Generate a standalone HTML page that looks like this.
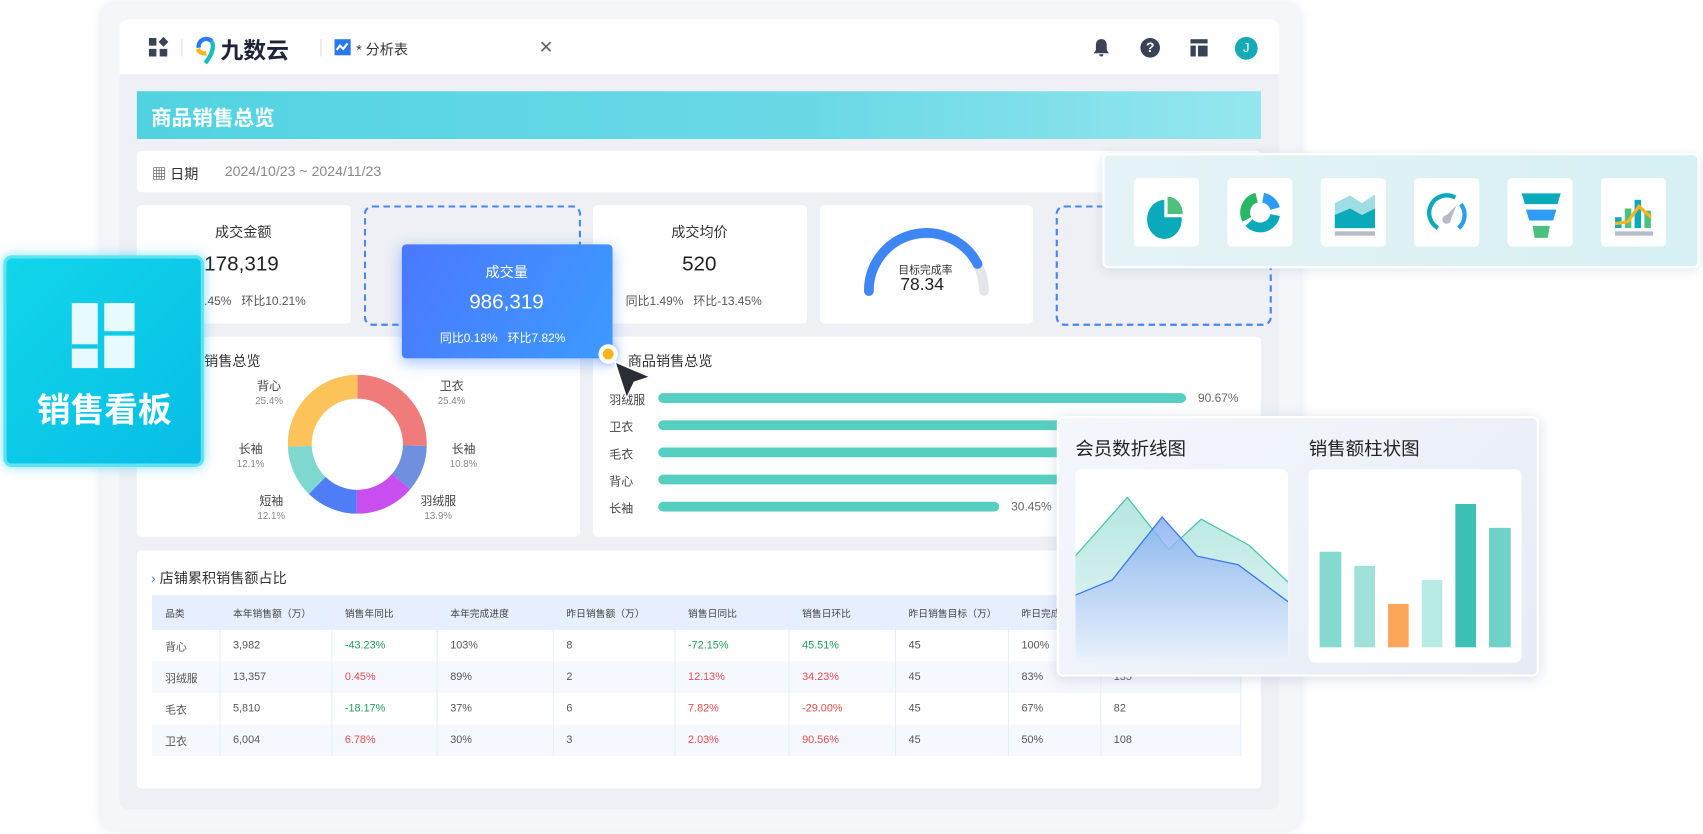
<!DOCTYPE html>
<html><head><meta charset="utf-8"><style>
*{margin:0;padding:0;box-sizing:border-box}
body{width:1703px;height:834px;overflow:hidden;background:#fff;font-family:"Liberation Sans","Noto Sans CJK SC",sans-serif;color:#333}
#w{position:absolute;left:0;top:0;width:1568px;height:768px;transform:scale(1.0861);transform-origin:0 0}
.a{position:absolute}
.card{position:absolute;background:#fff;border-radius:4px}
.dash{position:absolute;border:2px dashed #4a86f0;border-radius:8px}
.t{position:absolute;white-space:nowrap}
.ib{position:absolute;top:21px;width:60px;height:63px;background:#fff;border-radius:4px}
table{border-collapse:collapse;font-size:10px;color:#555}
td{height:29px;padding-left:12px;border-right:1px solid #e8eef8}
.g{color:#1f9d55}.r{color:#e94b4b}
</style></head><body><div id="w">
<div class="a" style="left:93px;top:3px;width:1104px;height:762px;background:#f4f6fa;border-radius:14px;box-shadow:0 0 10px rgba(150,160,190,.25)"></div>
<div class="a" style="left:110px;top:18px;width:1068px;height:727px;background:#eef0f5;border-radius:8px;overflow:hidden">
 <div class="a" style="left:0;top:0;width:1068px;height:50px;background:#fff"></div>
</div>
<!-- header -->
<svg class="a" style="left:137px;top:34px" width="20" height="20" viewBox="0 0 20 20"><rect x="0" y="1" width="7" height="7" fill="#3a4256"/><rect x="0" y="11" width="7" height="7" fill="#3a4256"/><rect x="10" y="11" width="7" height="7" fill="#3a4256"/><path d="M13.5 0 L18 4.5 L13.5 9 L9 4.5Z" fill="#3a4256"/></svg>
<div class="a" style="left:167px;top:36px;width:1px;height:16px;background:#ddd"></div>
<svg class="a" style="left:179px;top:32px" width="20" height="28" viewBox="0 0 20 28"><path d="M4 12 A7 7 0 0 1 16 6" stroke="#2a7bf6" stroke-width="4" fill="none"/><path d="M3 13 A7 7 0 0 0 11 17" stroke="#f7b51b" stroke-width="4" fill="none"/><path d="M16 6 C19 12 15 20 10 26" stroke="#18c0b8" stroke-width="4" fill="none"/></svg>
<div class="t" style="left:203px;top:31px;font-size:21px;color:#1d2438;font-weight:bold">九数云</div>
<div class="a" style="left:295px;top:36px;width:1px;height:16px;background:#ddd"></div>
<svg class="a" style="left:308px;top:36px" width="15" height="15"><rect width="15" height="15" fill="#2878f0"/><path d="M2 10 L5 6 L8 9 L12 4" stroke="#fff" stroke-width="2" fill="none"/></svg>
<div class="t" style="left:328px;top:35px;font-size:13px;color:#333">* 分析表</div>
<div class="t" style="left:496px;top:34px;font-size:16px;color:#666">✕</div>
<svg class="a" style="left:1005px;top:35px" width="18" height="18" viewBox="0 0 18 18"><path d="M9 1 C5 1 4 4 4 7 L4 11 L2 14 L16 14 L14 11 L14 7 C14 4 13 1 9 1Z M7 15 L11 15 A2 2 0 0 1 7 15Z" fill="#3a4256"/></svg>
<div class="a" style="left:1050px;top:35px;width:18px;height:18px;border-radius:50%;background:#3a4256;color:#fff;font-size:13px;font-weight:bold;text-align:center;line-height:18px">?</div>
<svg class="a" style="left:1096px;top:36px" width="16" height="16"><rect x="0" y="0" width="16" height="4" fill="#3a4256"/><rect x="0" y="6" width="5" height="10" fill="#3a4256"/><rect x="7" y="6" width="9" height="10" fill="#3a4256"/></svg>
<div class="a" style="left:1137px;top:34px;width:21px;height:21px;border-radius:50%;background:#16a9b8;color:#fff;font-size:12px;text-align:center;line-height:21px">J</div>
<!-- banner -->
<div class="a" style="left:126px;top:84px;width:1035px;height:44px;background:linear-gradient(90deg,#52d3e2,#6ad9e6 60%,#95e6ee)"></div>
<div class="t" style="left:139px;top:94px;font-size:19px;color:#fff;font-weight:bold">商品销售总览</div>
<!-- date -->
<div class="card" style="left:126px;top:139px;width:1035px;height:38px"></div>
<div class="t" style="left:140px;top:150px;font-size:13px;color:#333">▦ 日期</div>
<div class="t" style="left:207px;top:150px;font-size:13px;color:#888">2024/10/23 ~ 2024/11/23</div>
<!-- KPI -->
<div class="card" style="left:126px;top:189px;width:197px;height:109px"></div>
<div class="t" style="left:198px;top:203px;font-size:13px">成交金额</div>
<div class="t" style="left:188px;top:233px;font-size:19px;color:#222">178,319</div>
<div class="t" style="left:188px;top:269px;font-size:11px;color:#555">.45%&nbsp;&nbsp;&nbsp;环比10.21%</div>
<div class="dash" style="left:335px;top:189px;width:200px;height:111px"></div>
<div class="card" style="left:546px;top:189px;width:197px;height:109px"></div>
<div class="t" style="left:618px;top:203px;font-size:13px">成交均价</div>
<div class="t" style="left:628px;top:233px;font-size:19px;color:#222">520</div>
<div class="t" style="left:576px;top:269px;font-size:11px;color:#555">同比1.49%&nbsp;&nbsp;&nbsp;环比-13.45%</div>
<div class="card" style="left:755px;top:189px;width:196px;height:109px"></div>
<svg class="a" style="left:790px;top:205px" width="126" height="70"><path d="M10 63 A53 53 0 0 1 116 63" stroke="#e3e5ea" stroke-width="9" fill="none" stroke-linecap="round"/><path d="M10 63 A53 53 0 0 1 110 38" stroke="#3f86f5" stroke-width="9" fill="none" stroke-linecap="round"/></svg>
<div class="t" style="left:827px;top:240px;font-size:10px;color:#333">目标完成率</div>
<div class="t" style="left:829px;top:254px;font-size:16px;color:#222">78.34</div>
<div class="dash" style="left:972px;top:189px;width:199px;height:111px"></div>
<!-- donut panel -->
<div class="card" style="left:126px;top:310px;width:408px;height:184px"></div>
<div class="t" style="left:188px;top:322px;font-size:13px">销售总览</div>
<svg class="a" style="left:265px;top:345px" width="128" height="128" viewBox="0 0 128 128"><g transform="rotate(-90 64 64)" fill="none" stroke-width="22">
<circle cx="64" cy="64" r="53" stroke="#f07b7b" stroke-dasharray="84.6 333" stroke-dashoffset="0"/>
<circle cx="64" cy="64" r="53" stroke="#6f8fdf" stroke-dasharray="36 333" stroke-dashoffset="-84.6"/>
<circle cx="64" cy="64" r="53" stroke="#c84ef0" stroke-dasharray="46.3 333" stroke-dashoffset="-120.6"/>
<circle cx="64" cy="64" r="53" stroke="#4f7df5" stroke-dasharray="40.3 333" stroke-dashoffset="-166.9"/>
<circle cx="64" cy="64" r="53" stroke="#7fd8cf" stroke-dasharray="40.3 333" stroke-dashoffset="-207.2"/>
<circle cx="64" cy="64" r="53" stroke="#fbc35a" stroke-dasharray="85.5 333" stroke-dashoffset="-247.5"/></g></svg>
<div class="t" style="left:235px;top:347px;font-size:11px;color:#444;text-align:center">背心<br><span style="font-size:9px;color:#888">25.4%</span></div>
<div class="t" style="left:403px;top:347px;font-size:11px;color:#444;text-align:center">卫衣<br><span style="font-size:9px;color:#888">25.4%</span></div>
<div class="t" style="left:218px;top:405px;font-size:11px;color:#444;text-align:center">长袖<br><span style="font-size:9px;color:#888">12.1%</span></div>
<div class="t" style="left:414px;top:405px;font-size:11px;color:#444;text-align:center">长袖<br><span style="font-size:9px;color:#888">10.8%</span></div>
<div class="t" style="left:237px;top:453px;font-size:11px;color:#444;text-align:center">短袖<br><span style="font-size:9px;color:#888">12.1%</span></div>
<div class="t" style="left:387px;top:453px;font-size:11px;color:#444;text-align:center">羽绒服<br><span style="font-size:9px;color:#888">13.9%</span></div>
<!-- bar panel -->
<div class="card" style="left:546px;top:310px;width:615px;height:184px"></div>
<div class="t" style="left:578px;top:322px;font-size:13px">商品销售总览</div>
<div class="t" style="left:561px;top:360px;font-size:11px;color:#444">羽绒服</div>
<div class="t" style="left:561px;top:385px;font-size:11px;color:#444">卫衣</div>
<div class="t" style="left:561px;top:410px;font-size:11px;color:#444">毛衣</div>
<div class="t" style="left:561px;top:435px;font-size:11px;color:#444">背心</div>
<div class="t" style="left:561px;top:460px;font-size:11px;color:#444">长袖</div>
<div class="a" style="left:606px;top:362px;width:486px;height:9px;border-radius:5px;background:#56cfc0"></div>
<div class="a" style="left:606px;top:387px;width:380px;height:9px;border-radius:5px;background:#56cfc0"></div>
<div class="a" style="left:606px;top:412px;width:380px;height:9px;border-radius:5px;background:#56cfc0"></div>
<div class="a" style="left:606px;top:437px;width:380px;height:9px;border-radius:5px;background:#56cfc0"></div>
<div class="a" style="left:606px;top:462px;width:314px;height:9px;border-radius:5px;background:#56cfc0"></div>
<div class="t" style="left:1103px;top:361px;font-size:11px;color:#666">90.67%</div>
<div class="t" style="left:931px;top:461px;font-size:11px;color:#666">30.45%</div>
<!-- table -->
<div class="card" style="left:126px;top:507px;width:1035px;height:219px"></div>
<div class="t" style="left:139px;top:522px;font-size:13px;color:#333"><span style="color:#3a7ff0">›</span> 店铺累积销售额占比</div>
<table class="a" style="left:140px;top:548px;width:1003px">
<tr style="background:#e6effd;height:32px;font-size:9px;color:#444"><td style="width:62px">品类</td><td style="width:103px">本年销售额（万）</td><td style="width:97px">销售年同比</td><td style="width:107px">本年完成进度</td><td style="width:112px">昨日销售额（万）</td><td style="width:105px">销售日同比</td><td style="width:98px">销售日环比</td><td style="width:104px">昨日销售目标（万）</td><td style="width:85px">昨日完成</td><td></td></tr>
<tr style="background:#fff"><td>背心</td><td>3,982</td><td class="g">-43.23%</td><td>103%</td><td>8</td><td class="g">-72.15%</td><td class="g">45.51%</td><td>45</td><td>100%</td><td></td></tr>
<tr style="background:#f5f8fe"><td>羽绒服</td><td>13,357</td><td class="r">0.45%</td><td>89%</td><td>2</td><td class="r">12.13%</td><td class="r">34.23%</td><td>45</td><td>83%</td><td>135</td></tr>
<tr style="background:#fff"><td>毛衣</td><td>5,810</td><td class="g">-18.17%</td><td>37%</td><td>6</td><td class="r">7.82%</td><td class="r">-29.00%</td><td>45</td><td>67%</td><td>82</td></tr>
<tr style="background:#f5f8fe"><td>卫衣</td><td>6,004</td><td class="r">6.78%</td><td>30%</td><td>3</td><td class="r">2.03%</td><td class="r">90.56%</td><td>45</td><td>50%</td><td>108</td></tr>
</table>
<!-- floating blue card -->
<div class="a" style="left:370px;top:225px;width:194px;height:105px;border-radius:4px;background:linear-gradient(120deg,#4b78ff,#3b9bff);box-shadow:0 4px 14px rgba(60,120,255,.45)"></div>
<div class="t" style="left:447px;top:240px;font-size:13px;color:#fff">成交量</div>
<div class="t" style="left:432px;top:268px;font-size:19px;color:#fff">986,319</div>
<div class="t" style="left:405px;top:303px;font-size:11px;color:#fff">同比0.18%&nbsp;&nbsp;&nbsp;环比7.82%</div>
<div class="a" style="left:551px;top:317px;width:18px;height:18px;border-radius:50%;background:#fff;box-shadow:0 0 6px rgba(100,150,255,.6)"></div>
<div class="a" style="left:555px;top:321px;width:10px;height:10px;border-radius:50%;background:#f7b51b"></div>
<svg class="a" style="left:563px;top:330px" width="38" height="40"><path d="M3 3 L36 17 L21 22 L14 37Z" fill="#2a2d33" stroke="#fff" stroke-width="1.5"/></svg>
<!-- sales tile -->
<div class="a" style="left:3px;top:235px;width:185px;height:195px;border-radius:8px;background:linear-gradient(135deg,#12d6ea,#06bde6);box-shadow:0 0 10px rgba(20,200,230,.5);border:3px solid #5fe3f2"></div>
<svg class="a" style="left:66px;top:279px" width="58" height="60"><rect x="0" y="0" width="24" height="60" fill="#fff" opacity=".9"/><rect x="30" y="0" width="28" height="26" fill="#fff" opacity=".9"/><rect x="30" y="30" width="28" height="30" fill="#fff" opacity=".9"/><rect x="0" y="38" width="24" height="4" fill="#10c8e8"/></svg>
<div class="t" style="left:34px;top:352px;font-size:31px;color:#fff;font-weight:bold">销售看板</div>
<!-- icon panel -->
<div class="a" style="left:1015px;top:141px;width:550px;height:106px;border-radius:6px;background:linear-gradient(90deg,#e6f3f6,#d6f0f3);border:2px solid #fff;box-shadow:0 2px 10px rgba(150,180,200,.3)">
 <div class="ib" style="left:27px"><svg width="60" height="63"><path d="M28 20 A16 18 0 1 0 44 36 L28 36Z" fill="#0aaabb"/><path d="M31 17 A14 16 0 0 1 45 33 L31 33Z" fill="#4cc07c"/></svg></div>
 <div class="ib" style="left:113px"><svg width="60" height="63"><g fill="none" stroke-width="9"><path d="M27 18 A14 14 0 0 0 18 38" stroke="#27b768"/><path d="M33 18 A14 14 0 0 1 44 28" stroke="#2c9cf5"/><path d="M44 34 A14 14 0 0 1 20 41" stroke="#0aaabb"/></g></svg></div>
 <div class="ib" style="left:199px"><svg width="60" height="63"><path d="M13 23 L27 16 L38 23 L50 15 L50 46 L13 46Z" fill="#9fdde5"/><path d="M13 34 L27 28 L38 34 L50 28 L50 46 L13 46Z" fill="#0aaabb"/><rect x="13" y="49" width="37" height="4" fill="#b7bac8"/></svg></div>
 <div class="ib" style="left:285px"><svg width="60" height="63"><path d="M22 46 A16 16 0 0 1 38 18" stroke="#0aaabb" stroke-width="4" fill="none"/><path d="M43 24 A16 16 0 0 1 41 46" stroke="#2c9cf5" stroke-width="4" fill="none"/><circle cx="30" cy="38" r="4" fill="#b7bac8"/><path d="M28 36 L39 25 L33 40Z" fill="#b7bac8"/></svg></div>
 <div class="ib" style="left:371px"><svg width="60" height="63"><path d="M13 14 L49 14 L46 24 L16 24Z" fill="#0aaabb"/><path d="M17 29 L45 29 L42 39 L20 39Z" fill="#2c9cf5"/><path d="M23 44 L39 44 L37 55 L25 55Z" fill="#4cc07c"/></svg></div>
 <div class="ib" style="left:457px"><svg width="60" height="63"><rect x="13" y="36" width="6" height="10" fill="#0aaabb"/><rect x="22" y="28" width="6" height="18" fill="#4cc07c"/><rect x="31" y="20" width="6" height="26" fill="#0aaabb"/><rect x="40" y="30" width="6" height="16" fill="#4cc07c"/><path d="M13 42 L25 40 L35 26 L46 36" stroke="#f7b51b" stroke-width="3" fill="none"/><rect x="13" y="49" width="35" height="4" fill="#b7bac8"/></svg></div>
</div>
<!-- chart panel -->
<div class="a" style="left:973px;top:383px;width:444px;height:240px;border-radius:6px;background:linear-gradient(135deg,#f4f7fc,#e6ecf6);border:2px solid #fff;box-shadow:0 2px 12px rgba(140,160,190,.35)"></div>
<div class="t" style="left:990px;top:399px;font-size:17px;color:#222">会员数折线图</div>
<div class="t" style="left:1205px;top:399px;font-size:17px;color:#222">销售额柱状图</div>
<div class="a" style="left:990px;top:432px;width:196px;height:178px;border-radius:6px;background:#fff;overflow:hidden">
<svg width="196" height="178"><defs><linearGradient id="g1" x1="0" y1="0" x2="0" y2="1"><stop offset="0" stop-color="#a8e2da"/><stop offset="1" stop-color="#e8f6f6"/></linearGradient><linearGradient id="g2" x1="0" y1="0" x2="0" y2="1"><stop offset="0" stop-color="#7faaf0"/><stop offset="1" stop-color="#eaf1fd"/></linearGradient></defs>
<path d="M0 80 L48 26 L86 74 L116 46 L160 70 L196 104 L196 178 L0 178Z" fill="url(#g1)" opacity=".85"/>
<path d="M0 80 L48 26 L86 74 L116 46 L160 70 L196 104" stroke="#4cc4b0" stroke-width="1.2" fill="none"/>
<path d="M0 116 L34 102 L80 44 L112 80 L150 88 L196 122 L196 178 L0 178Z" fill="url(#g2)" opacity=".8"/>
<path d="M0 116 L34 102 L80 44 L112 80 L150 88 L196 122" stroke="#3a78ee" stroke-width="1.2" fill="none"/></svg></div>
<div class="a" style="left:1205px;top:432px;width:196px;height:178px;border-radius:6px;background:#fff">
 <div class="a" style="left:10px;top:76px;width:20px;height:88px;background:#86d9cf"></div>
 <div class="a" style="left:42px;top:89px;width:19px;height:75px;background:#9fe0d8"></div>
 <div class="a" style="left:73px;top:124px;width:19px;height:40px;background:#fca65a"></div>
 <div class="a" style="left:104px;top:102px;width:19px;height:62px;background:#b8ebe5"></div>
 <div class="a" style="left:135px;top:32px;width:19px;height:132px;background:#3cc0b4"></div>
 <div class="a" style="left:166px;top:54px;width:20px;height:110px;background:#6fd2c8"></div>
</div>
</div></body></html>
